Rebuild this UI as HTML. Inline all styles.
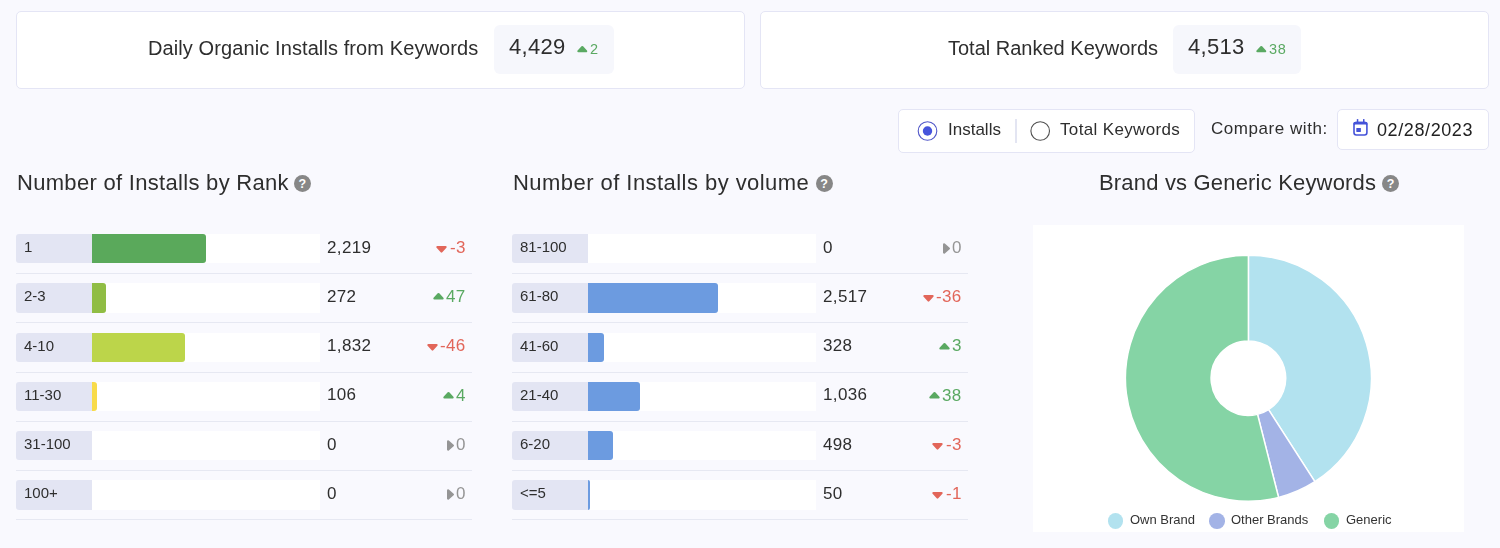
<!DOCTYPE html>
<html><head><meta charset="utf-8"><style>
html,body{margin:0;padding:0}
body{width:1500px;height:548px;background:#f9f9fe;font-family:"Liberation Sans",sans-serif;position:relative;overflow:hidden;color:#333}
.a{position:absolute;white-space:nowrap;line-height:1;will-change:transform}
.b{position:absolute;display:block}
</style></head><body>
<div class="b" style="left:16.00px;top:11.00px;width:729.00px;height:78.00px;background:#fff;border:1px solid #e4e5f5;border-radius:5px;box-sizing:border-box"></div>
<div class="b" style="left:760.00px;top:11.00px;width:729.00px;height:78.00px;background:#fff;border:1px solid #e4e5f5;border-radius:5px;box-sizing:border-box"></div>
<div class="a" style="left:148.30px;top:37.57px;font-size:20px;color:#2e2e2e;letter-spacing:0.1px">Daily Organic Installs from Keywords</div>
<div class="a" style="left:947.80px;top:37.57px;font-size:20px;color:#2e2e2e;letter-spacing:0px">Total Ranked Keywords</div>
<div class="b" style="left:494.00px;top:25.00px;width:120.00px;height:49.00px;background:#f6f7fc;border-radius:6px"></div>
<div class="b" style="left:1173.00px;top:25.00px;width:128.00px;height:49.00px;background:#f6f7fc;border-radius:6px"></div>
<div class="a" style="left:508.50px;top:36.48px;font-size:22px;color:#2e2e2e;letter-spacing:0.3px">4,429</div>
<div class="a" style="left:1187.50px;top:36.48px;font-size:22px;color:#2e2e2e;letter-spacing:0.3px">4,513</div>
<svg class="b" style="left:577px;top:45.6px;overflow:visible" width="10.6" height="6.3" viewBox="0 0 10.6 6.3"><path d="M1.4000000000000001 5.199999999999999 L5.3 1.1 L9.2 5.199999999999999 Z" fill="#5aa962" stroke="#5aa962" stroke-width="2.2" stroke-linejoin="round"/></svg>
<div class="a" style="left:590.40px;top:42.33px;font-size:14.5px;color:#5aa962;letter-spacing:0.6px">2</div>
<svg class="b" style="left:1255.7px;top:45.6px;overflow:visible" width="10.6" height="6.3" viewBox="0 0 10.6 6.3"><path d="M1.4000000000000001 5.199999999999999 L5.3 1.1 L9.2 5.199999999999999 Z" fill="#5aa962" stroke="#5aa962" stroke-width="2.2" stroke-linejoin="round"/></svg>
<div class="a" style="left:1269.40px;top:42.33px;font-size:14.5px;color:#5aa962;letter-spacing:0.6px">38</div>
<div class="b" style="left:898.00px;top:109.00px;width:297.00px;height:44.00px;background:#fff;border:1px solid #e4e5f5;border-radius:5px;box-sizing:border-box"></div>
<svg class="b" style="left:910px;top:115px" width="35" height="32"><circle cx="17.5" cy="16" r="9.3" fill="none" stroke="#5056c8" stroke-width="1.1"/><circle cx="17.5" cy="16" r="4.7" fill="#4654dc"/></svg>
<div class="a" style="left:947.80px;top:120.91px;font-size:17px;color:#2e2e2e;">Installs</div>
<div class="b" style="left:1014.50px;top:119.00px;width:2.00px;height:24.00px;background:#e3e5f2"></div>
<svg class="b" style="left:1025px;top:115px" width="35" height="32"><circle cx="15.2" cy="16" r="9.3" fill="none" stroke="#505050" stroke-width="1.1"/></svg>
<div class="a" style="left:1060.30px;top:120.91px;font-size:17px;color:#2e2e2e;letter-spacing:0.35px">Total Keywords</div>
<div class="a" style="left:1210.80px;top:119.71px;font-size:17px;color:#2e2e2e;letter-spacing:0.55px">Compare with:</div>
<div class="b" style="left:1337.00px;top:109.00px;width:152.00px;height:41.00px;background:#fff;border:1px solid #e4e5f5;border-radius:5px;box-sizing:border-box"></div>
<svg class="b" style="left:1352px;top:118px" width="17" height="19" viewBox="0 0 17 19"><rect x="2" y="4.65" width="12.9" height="12.35" rx="2.4" fill="none" stroke="#4553d9" stroke-width="1.6"/><path d="M1.2 6.6 V6.2 Q1.2 3.85 3.6 3.85 H13.3 Q15.7 3.85 15.7 6.2 V6.6 Z" fill="#4553d9"/><rect x="4.8" y="1.1" width="1.5" height="3.5" fill="#4553d9"/><rect x="11" y="1.1" width="1.5" height="3.5" fill="#4553d9"/><rect x="4.3" y="9.9" width="4.6" height="4.1" rx="0.4" fill="#4553d9"/></svg>
<div class="a" style="left:1377.00px;top:120.66px;font-size:18px;color:#222;letter-spacing:0.6px">02/28/2023</div>
<div class="a" style="left:17.30px;top:172.28px;font-size:22px;color:#2e2e2e;letter-spacing:0.3px">Number of Installs by Rank</div>
<div class="b" style="left:293.60px;top:174.90px;width:17px;height:17px;border-radius:50%;background:#878787;color:#fff;font-size:12.5px;font-weight:bold;line-height:17px;text-align:center;text-indent:0.3px"><span style="position:relative;top:1.1px">?</span></div>
<div class="a" style="left:512.80px;top:172.28px;font-size:22px;color:#2e2e2e;letter-spacing:0.45px">Number of Installs by volume</div>
<div class="b" style="left:815.50px;top:174.80px;width:17px;height:17px;border-radius:50%;background:#878787;color:#fff;font-size:12.5px;font-weight:bold;line-height:17px;text-align:center;text-indent:0.3px"><span style="position:relative;top:1.1px">?</span></div>
<div class="a" style="left:1098.80px;top:172.28px;font-size:22px;color:#2e2e2e;letter-spacing:0.18px">Brand vs Generic Keywords</div>
<div class="b" style="left:1381.80px;top:174.80px;width:17px;height:17px;border-radius:50%;background:#878787;color:#fff;font-size:12.5px;font-weight:bold;line-height:17px;text-align:center;text-indent:0.3px"><span style="position:relative;top:1.1px">?</span></div>
<div class="b" style="left:16.00px;top:234.00px;width:76.00px;height:29.25px;background:#e3e5f3;border-radius:3px 0 0 3px"></div>
<div class="b" style="left:92.00px;top:234.00px;width:228.00px;height:29.25px;background:#fff"></div>
<div class="b" style="left:92.00px;top:234.00px;width:114.00px;height:29.25px;background:#5aa95b;border-radius:0 3px 3px 0"></div>
<div class="a" style="left:24.30px;top:239.20px;font-size:15px;color:#2e2e2e;">1</div>
<div class="a" style="left:327.00px;top:238.51px;font-size:17px;color:#2e2e2e;letter-spacing:0.35px">2,219</div>
<div class="a" style="right:1034.20px;top:238.81px;font-size:17px;color:#e2665a;letter-spacing:0.3px">-3</div>
<svg class="b" style="left:436.48px;top:245.8px;overflow:visible" width="11" height="6.6" viewBox="0 0 11 6.6"><path d="M1.4000000000000001 1.1 L5.5 5.5 L9.6 1.1 Z" fill="#e2665a" stroke="#e2665a" stroke-width="2.2" stroke-linejoin="round"/></svg>
<div class="b" style="left:16.00px;top:273.00px;width:456.00px;height:1.00px;background:#e6e8f2"></div>
<div class="b" style="left:16.00px;top:283.25px;width:76.00px;height:29.25px;background:#e3e5f3;border-radius:3px 0 0 3px"></div>
<div class="b" style="left:92.00px;top:283.25px;width:228.00px;height:29.25px;background:#fff"></div>
<div class="b" style="left:92.00px;top:283.25px;width:13.68px;height:29.25px;background:#90bd44;border-radius:0 3px 3px 0"></div>
<div class="a" style="left:24.30px;top:288.45px;font-size:15px;color:#2e2e2e;">2-3</div>
<div class="a" style="left:327.00px;top:287.76px;font-size:17px;color:#2e2e2e;letter-spacing:0.35px">272</div>
<div class="a" style="right:1034.20px;top:288.06px;font-size:17px;color:#5aa962;letter-spacing:0.3px">47</div>
<svg class="b" style="left:432.78000000000003px;top:293.45px;overflow:visible" width="11" height="6.6" viewBox="0 0 11 6.6"><path d="M1.4000000000000001 5.5 L5.5 1.1 L9.6 5.5 Z" fill="#5aa962" stroke="#5aa962" stroke-width="2.2" stroke-linejoin="round"/></svg>
<div class="b" style="left:16.00px;top:322.25px;width:456.00px;height:1.00px;background:#e6e8f2"></div>
<div class="b" style="left:16.00px;top:332.50px;width:76.00px;height:29.25px;background:#e3e5f3;border-radius:3px 0 0 3px"></div>
<div class="b" style="left:92.00px;top:332.50px;width:228.00px;height:29.25px;background:#fff"></div>
<div class="b" style="left:92.00px;top:332.50px;width:93.48px;height:29.25px;background:#bcd54a;border-radius:0 3px 3px 0"></div>
<div class="a" style="left:24.30px;top:337.70px;font-size:15px;color:#2e2e2e;">4-10</div>
<div class="a" style="left:327.00px;top:337.01px;font-size:17px;color:#2e2e2e;letter-spacing:0.35px">1,832</div>
<div class="a" style="right:1034.20px;top:337.31px;font-size:17px;color:#e2665a;letter-spacing:0.3px">-46</div>
<svg class="b" style="left:426.71999999999997px;top:344.3px;overflow:visible" width="11" height="6.6" viewBox="0 0 11 6.6"><path d="M1.4000000000000001 1.1 L5.5 5.5 L9.6 1.1 Z" fill="#e2665a" stroke="#e2665a" stroke-width="2.2" stroke-linejoin="round"/></svg>
<div class="b" style="left:16.00px;top:371.50px;width:456.00px;height:1.00px;background:#e6e8f2"></div>
<div class="b" style="left:16.00px;top:381.75px;width:76.00px;height:29.25px;background:#e3e5f3;border-radius:3px 0 0 3px"></div>
<div class="b" style="left:92.00px;top:381.75px;width:228.00px;height:29.25px;background:#fff"></div>
<div class="b" style="left:92.00px;top:381.75px;width:4.56px;height:29.25px;background:#f8db4a;border-radius:0 3px 3px 0"></div>
<div class="a" style="left:24.30px;top:386.95px;font-size:15px;color:#2e2e2e;">11-30</div>
<div class="a" style="left:327.00px;top:386.26px;font-size:17px;color:#2e2e2e;letter-spacing:0.35px">106</div>
<div class="a" style="right:1034.20px;top:386.56px;font-size:17px;color:#5aa962;letter-spacing:0.3px">4</div>
<svg class="b" style="left:442.55px;top:391.95px;overflow:visible" width="11" height="6.6" viewBox="0 0 11 6.6"><path d="M1.4000000000000001 5.5 L5.5 1.1 L9.6 5.5 Z" fill="#5aa962" stroke="#5aa962" stroke-width="2.2" stroke-linejoin="round"/></svg>
<div class="b" style="left:16.00px;top:420.75px;width:456.00px;height:1.00px;background:#e6e8f2"></div>
<div class="b" style="left:16.00px;top:431.00px;width:76.00px;height:29.25px;background:#e3e5f3;border-radius:3px 0 0 3px"></div>
<div class="b" style="left:92.00px;top:431.00px;width:228.00px;height:29.25px;background:#fff"></div>
<div class="a" style="left:24.30px;top:436.20px;font-size:15px;color:#2e2e2e;">31-100</div>
<div class="a" style="left:327.00px;top:435.51px;font-size:17px;color:#2e2e2e;letter-spacing:0.35px">0</div>
<div class="a" style="right:1034.20px;top:435.81px;font-size:17px;color:#959595;letter-spacing:0.3px">0</div>
<svg class="b" style="left:446.83000000000004px;top:439.7px;overflow:visible" width="7" height="11" viewBox="0 0 7 11"><path d="M1.1 1.4000000000000001 L5.9 5.5 L1.1 9.6 Z" fill="#959595" stroke="#959595" stroke-width="2.2" stroke-linejoin="round"/></svg>
<div class="b" style="left:16.00px;top:470.00px;width:456.00px;height:1.00px;background:#e6e8f2"></div>
<div class="b" style="left:16.00px;top:480.25px;width:76.00px;height:29.25px;background:#e3e5f3;border-radius:3px 0 0 3px"></div>
<div class="b" style="left:92.00px;top:480.25px;width:228.00px;height:29.25px;background:#fff"></div>
<div class="a" style="left:24.30px;top:485.45px;font-size:15px;color:#2e2e2e;">100+</div>
<div class="a" style="left:327.00px;top:484.76px;font-size:17px;color:#2e2e2e;letter-spacing:0.35px">0</div>
<div class="a" style="right:1034.20px;top:485.06px;font-size:17px;color:#959595;letter-spacing:0.3px">0</div>
<svg class="b" style="left:446.83000000000004px;top:488.95px;overflow:visible" width="7" height="11" viewBox="0 0 7 11"><path d="M1.1 1.4000000000000001 L5.9 5.5 L1.1 9.6 Z" fill="#959595" stroke="#959595" stroke-width="2.2" stroke-linejoin="round"/></svg>
<div class="b" style="left:16.00px;top:519.25px;width:456.00px;height:1.00px;background:#e6e8f2"></div>
<div class="b" style="left:512.00px;top:234.00px;width:76.00px;height:29.25px;background:#e3e5f3;border-radius:3px 0 0 3px"></div>
<div class="b" style="left:588.00px;top:234.00px;width:228.00px;height:29.25px;background:#fff"></div>
<div class="a" style="left:520.30px;top:239.20px;font-size:15px;color:#2e2e2e;">81-100</div>
<div class="a" style="left:823.00px;top:238.51px;font-size:17px;color:#2e2e2e;letter-spacing:0.35px">0</div>
<div class="a" style="right:538.20px;top:238.81px;font-size:17px;color:#959595;letter-spacing:0.3px">0</div>
<svg class="b" style="left:942.8299999999999px;top:242.7px;overflow:visible" width="7" height="11" viewBox="0 0 7 11"><path d="M1.1 1.4000000000000001 L5.9 5.5 L1.1 9.6 Z" fill="#959595" stroke="#959595" stroke-width="2.2" stroke-linejoin="round"/></svg>
<div class="b" style="left:512.00px;top:273.00px;width:456.00px;height:1.00px;background:#e6e8f2"></div>
<div class="b" style="left:512.00px;top:283.25px;width:76.00px;height:29.25px;background:#e3e5f3;border-radius:3px 0 0 3px"></div>
<div class="b" style="left:588.00px;top:283.25px;width:228.00px;height:29.25px;background:#fff"></div>
<div class="b" style="left:588.00px;top:283.25px;width:129.96px;height:29.25px;background:#6c9be0;border-radius:0 3px 3px 0"></div>
<div class="a" style="left:520.30px;top:288.45px;font-size:15px;color:#2e2e2e;">61-80</div>
<div class="a" style="left:823.00px;top:287.76px;font-size:17px;color:#2e2e2e;letter-spacing:0.35px">2,517</div>
<div class="a" style="right:538.20px;top:288.06px;font-size:17px;color:#e2665a;letter-spacing:0.3px">-36</div>
<svg class="b" style="left:922.7199999999999px;top:295.05px;overflow:visible" width="11" height="6.6" viewBox="0 0 11 6.6"><path d="M1.4000000000000001 1.1 L5.5 5.5 L9.6 1.1 Z" fill="#e2665a" stroke="#e2665a" stroke-width="2.2" stroke-linejoin="round"/></svg>
<div class="b" style="left:512.00px;top:322.25px;width:456.00px;height:1.00px;background:#e6e8f2"></div>
<div class="b" style="left:512.00px;top:332.50px;width:76.00px;height:29.25px;background:#e3e5f3;border-radius:3px 0 0 3px"></div>
<div class="b" style="left:588.00px;top:332.50px;width:228.00px;height:29.25px;background:#fff"></div>
<div class="b" style="left:588.00px;top:332.50px;width:15.96px;height:29.25px;background:#6c9be0;border-radius:0 3px 3px 0"></div>
<div class="a" style="left:520.30px;top:337.70px;font-size:15px;color:#2e2e2e;">41-60</div>
<div class="a" style="left:823.00px;top:337.01px;font-size:17px;color:#2e2e2e;letter-spacing:0.35px">328</div>
<div class="a" style="right:538.20px;top:337.31px;font-size:17px;color:#5aa962;letter-spacing:0.3px">3</div>
<svg class="b" style="left:938.55px;top:342.7px;overflow:visible" width="11" height="6.6" viewBox="0 0 11 6.6"><path d="M1.4000000000000001 5.5 L5.5 1.1 L9.6 5.5 Z" fill="#5aa962" stroke="#5aa962" stroke-width="2.2" stroke-linejoin="round"/></svg>
<div class="b" style="left:512.00px;top:371.50px;width:456.00px;height:1.00px;background:#e6e8f2"></div>
<div class="b" style="left:512.00px;top:381.75px;width:76.00px;height:29.25px;background:#e3e5f3;border-radius:3px 0 0 3px"></div>
<div class="b" style="left:588.00px;top:381.75px;width:228.00px;height:29.25px;background:#fff"></div>
<div class="b" style="left:588.00px;top:381.75px;width:52.44px;height:29.25px;background:#6c9be0;border-radius:0 3px 3px 0"></div>
<div class="a" style="left:520.30px;top:386.95px;font-size:15px;color:#2e2e2e;">21-40</div>
<div class="a" style="left:823.00px;top:386.26px;font-size:17px;color:#2e2e2e;letter-spacing:0.35px">1,036</div>
<div class="a" style="right:538.20px;top:386.56px;font-size:17px;color:#5aa962;letter-spacing:0.3px">38</div>
<svg class="b" style="left:928.78px;top:391.95px;overflow:visible" width="11" height="6.6" viewBox="0 0 11 6.6"><path d="M1.4000000000000001 5.5 L5.5 1.1 L9.6 5.5 Z" fill="#5aa962" stroke="#5aa962" stroke-width="2.2" stroke-linejoin="round"/></svg>
<div class="b" style="left:512.00px;top:420.75px;width:456.00px;height:1.00px;background:#e6e8f2"></div>
<div class="b" style="left:512.00px;top:431.00px;width:76.00px;height:29.25px;background:#e3e5f3;border-radius:3px 0 0 3px"></div>
<div class="b" style="left:588.00px;top:431.00px;width:228.00px;height:29.25px;background:#fff"></div>
<div class="b" style="left:588.00px;top:431.00px;width:25.08px;height:29.25px;background:#6c9be0;border-radius:0 3px 3px 0"></div>
<div class="a" style="left:520.30px;top:436.20px;font-size:15px;color:#2e2e2e;">6-20</div>
<div class="a" style="left:823.00px;top:435.51px;font-size:17px;color:#2e2e2e;letter-spacing:0.35px">498</div>
<div class="a" style="right:538.20px;top:435.81px;font-size:17px;color:#e2665a;letter-spacing:0.3px">-3</div>
<svg class="b" style="left:932.48px;top:442.8px;overflow:visible" width="11" height="6.6" viewBox="0 0 11 6.6"><path d="M1.4000000000000001 1.1 L5.5 5.5 L9.6 1.1 Z" fill="#e2665a" stroke="#e2665a" stroke-width="2.2" stroke-linejoin="round"/></svg>
<div class="b" style="left:512.00px;top:470.00px;width:456.00px;height:1.00px;background:#e6e8f2"></div>
<div class="b" style="left:512.00px;top:480.25px;width:76.00px;height:29.25px;background:#e3e5f3;border-radius:3px 0 0 3px"></div>
<div class="b" style="left:588.00px;top:480.25px;width:228.00px;height:29.25px;background:#fff"></div>
<div class="b" style="left:588.00px;top:480.25px;width:2.28px;height:29.25px;background:#6c9be0;border-radius:0 3px 3px 0"></div>
<div class="a" style="left:520.30px;top:485.45px;font-size:15px;color:#2e2e2e;">&lt;=5</div>
<div class="a" style="left:823.00px;top:484.76px;font-size:17px;color:#2e2e2e;letter-spacing:0.35px">50</div>
<div class="a" style="right:538.20px;top:485.06px;font-size:17px;color:#e2665a;letter-spacing:0.3px">-1</div>
<svg class="b" style="left:932.48px;top:492.05px;overflow:visible" width="11" height="6.6" viewBox="0 0 11 6.6"><path d="M1.4000000000000001 1.1 L5.5 5.5 L9.6 1.1 Z" fill="#e2665a" stroke="#e2665a" stroke-width="2.2" stroke-linejoin="round"/></svg>
<div class="b" style="left:512.00px;top:519.25px;width:456.00px;height:1.00px;background:#e6e8f2"></div>
<div class="b" style="left:1033.00px;top:225.00px;width:431.00px;height:307.00px;background:#fff"></div>
<svg class="b" style="left:1033px;top:225px" width="431" height="307" viewBox="0 0 431 307"><path d="M215.40 30.20 A123 123 0 0 1 281.85 256.71 L235.55 184.59 A37.3 37.3 0 0 0 215.40 115.90 Z" fill="#b2e2ef" stroke="#fff" stroke-width="1.5" stroke-linejoin="round"/><path d="M281.85 256.71 A123 123 0 0 1 245.57 272.44 L224.55 189.36 A37.3 37.3 0 0 0 235.55 184.59 Z" fill="#a3b3e6" stroke="#fff" stroke-width="1.5" stroke-linejoin="round"/><path d="M245.57 272.44 A123 123 0 1 1 215.40 30.20 L215.40 115.90 A37.3 37.3 0 1 0 224.55 189.36 Z" fill="#85d4a5" stroke="#fff" stroke-width="1.5" stroke-linejoin="round"/></svg>
<div class="b" style="left:1107.80px;top:513.00px;width:15.60px;height:15.60px;background:#b2e2ef;border-radius:50%"></div>
<div class="a" style="left:1129.80px;top:513.30px;font-size:13px;color:#333;letter-spacing:0px">Own Brand</div>
<div class="b" style="left:1209.00px;top:513.00px;width:15.60px;height:15.60px;background:#a3b3e6;border-radius:50%"></div>
<div class="a" style="left:1230.50px;top:513.30px;font-size:13px;color:#333;letter-spacing:0px">Other Brands</div>
<div class="b" style="left:1323.50px;top:513.00px;width:15.60px;height:15.60px;background:#85d4a5;border-radius:50%"></div>
<div class="a" style="left:1345.50px;top:513.30px;font-size:13px;color:#333;letter-spacing:0px">Generic</div>
</body></html>
